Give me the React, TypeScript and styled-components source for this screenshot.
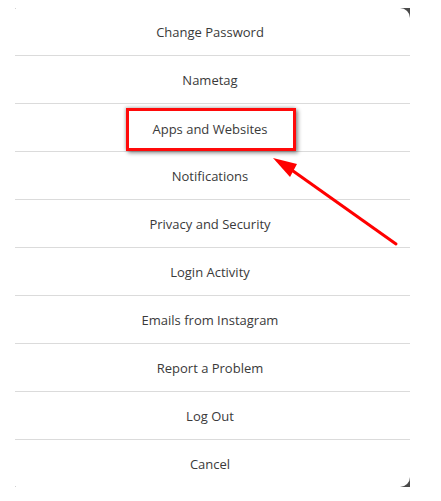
import React from "react";
import styled, { createGlobalStyle } from "styled-components";

const Global = createGlobalStyle`
  html, body { margin: 0; padding: 0; background: #ffffff; }
  body { font-family: "Open Sans", "Noto Sans", Arial, sans-serif; }
`;

const Page = styled.div`
  position: relative;
  width: 441px;
  height: 501px;
  padding: 8px 31px 0 15px;
  box-sizing: border-box;
`;

const Backdrop = styled.div`
  background: #4a4a4a;
`;

const Dialog = styled.ul`
  list-style: none;
  margin: 0;
  padding: 0;
  background: #ffffff;
  border-radius: 1px 10px 10px 1px;
  overflow: hidden;
`;

const Row = styled.li<{ $last?: boolean }>`
  height: 47px;
  display: flex;
  align-items: center;
  justify-content: center;
  padding-right: 5px;
  border-bottom: ${(p) => (p.$last ? "none" : "1px solid #dbdbdb")};
  font-size: 13px;
  color: #3a3a3a;
`;

const Highlight = styled.span`
  display: inline-flex;
  align-items: center;
  justify-content: center;
  box-sizing: border-box;
  width: 170px;
  height: 43px;
  margin-top: 3px;
  margin-right: -2px;
  border: 3px solid #ff0a0a;
  box-shadow: 2px 2px 4px rgba(0, 0, 0, 0.45), -1px -1px 3px rgba(0, 0, 0, 0.2);
  padding-right: 2px;
`;

const Arrow = styled.svg`
  position: absolute;
  left: 0;
  top: 0;
  pointer-events: none;
`;

const items = [
  "Change Password",
  "Nametag",
  "Apps and Websites",
  "Notifications",
  "Privacy and Security",
  "Login Activity",
  "Emails from Instagram",
  "Report a Problem",
  "Log Out",
  "Cancel",
];

export default function App() {
  return (
    <>
      <Global />
      <Page>
        <Backdrop>
          <Dialog>
            {items.map((label, i) => (
              <Row key={label} $last={i === items.length - 1}>
                {label === "Apps and Websites" ? <Highlight>{label}</Highlight> : label}
              </Row>
            ))}
          </Dialog>
        </Backdrop>
        <Arrow width="441" height="501" viewBox="0 0 441 501">
          <line x1="396" y1="244" x2="286" y2="166" stroke="#ff0000" strokeWidth="3" strokeLinecap="round" />
          <polygon points="273,158 297,164 290,177" fill="#ff0000" />
        </Arrow>
      </Page>
    </>
  );
}
